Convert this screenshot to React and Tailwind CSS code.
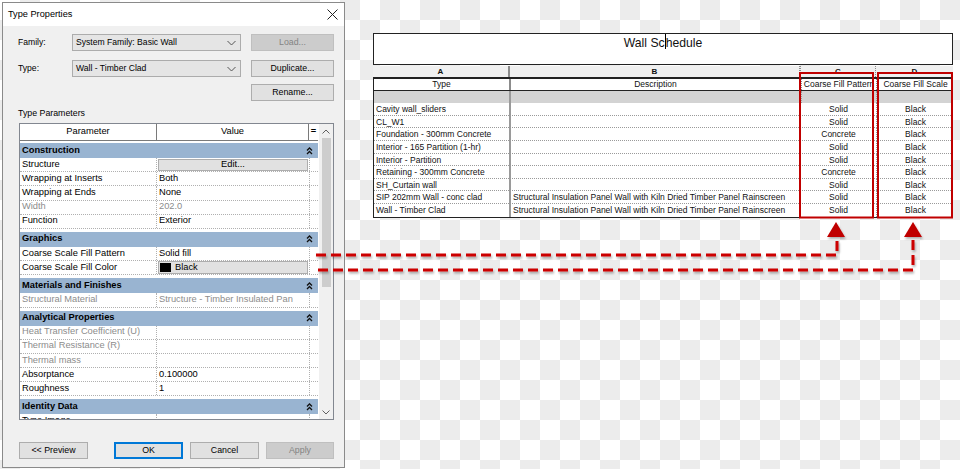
import React from "react";

const groups = [
  {
    name: "Construction",
    rows: [
      { name: "Structure", kind: "edit" },
      { name: "Wrapping at Inserts", value: "Both" },
      { name: "Wrapping at Ends", value: "None" },
      { name: "Width", value: "202.0", gray: true },
      { name: "Function", value: "Exterior" },
    ],
  },
  {
    name: "Graphics",
    rows: [
      { name: "Coarse Scale Fill Pattern", value: "Solid fill" },
      { name: "Coarse Scale Fill Color", kind: "color" },
    ],
  },
  {
    name: "Materials and Finishes",
    rows: [{ name: "Structural Material", value: "Structure - Timber Insulated Pan", gray: true }],
  },
  {
    name: "Analytical Properties",
    rows: [
      { name: "Heat Transfer Coefficient (U)", value: "", gray: true },
      { name: "Thermal Resistance (R)", value: "", gray: true },
      { name: "Thermal mass", value: "", gray: true },
      { name: "Absorptance", value: "0.100000" },
      { name: "Roughness", value: "1" },
    ],
  },
  {
    name: "Identity Data",
    rows: [{ name: "Type Image", value: "" }],
  },
];

const scheduleRows = [
  ["Cavity wall_sliders", "", "Solid", "Black"],
  ["CL_W1", "", "Solid", "Black"],
  ["Foundation - 300mm Concrete", "", "Concrete", "Black"],
  ["Interior - 165 Partition (1-hr)", "", "Solid", "Black"],
  ["Interior - Partition", "", "Solid", "Black"],
  ["Retaining - 300mm Concrete", "", "Concrete", "Black"],
  ["SH_Curtain wall", "", "Solid", "Black"],
  ["SIP 202mm Wall - conc clad", "Structural Insulation Panel Wall with Kiln Dried Timber Panel Rainscreen", "Solid", "Black"],
  ["Wall - Timber Clad", "Structural Insulation Panel Wall with Kiln Dried Timber Panel Rainscreen", "Solid", "Black"],
];

const DoubleChevron = () => (
  <svg width="7" height="8" viewBox="0 0 7 8" className="shrink-0">
    <path d="M1 3.5 L3.5 1 L6 3.5 M1 7 L3.5 4.5 L6 7" stroke="#111" strokeWidth="1.3" fill="none" />
  </svg>
);

const ComboArrow = () => (
  <svg width="9" height="6" viewBox="0 0 9 6">
    <path d="M0.5 1 L4.5 5 L8.5 1" stroke="#555" strokeWidth="1" fill="none" />
  </svg>
);

const Combo = ({ text }) => (
  <div className="w-[169px] h-[17px] bg-[#e5e5e5] border border-[#acacac] flex items-center justify-between pl-[3px] pr-[4px] text-[8.6px]">
    <span>{text}</span>
    <ComboArrow />
  </div>
);

const Btn = ({ children, disabled, primary, w = "w-[83px]" }) => (
  <div
    className={`${w} h-[17px] flex items-center justify-center text-[8.8px] ${
      disabled
        ? "bg-[#cccccc] border border-[#bfbfbf] text-[#838383]"
        : primary
        ? "bg-[#e1e1e1] border-2 border-[#0078d7]"
        : "bg-[#e1e1e1] border border-[#adadad]"
    }`}
  >
    {children}
  </div>
);

const ParamRow = ({ row }) => {
  const tone = row.gray ? "text-[#8c8c8c]" : "text-black";
  return (
    <div className="flex h-[14.2px] border-b border-dotted border-[#b0b0b0] bg-white">
      <div className={`w-[137px] shrink-0 pl-[2px] flex items-center border-r border-dotted border-[#b0b0b0] whitespace-nowrap overflow-hidden ${tone}`}>
        {row.name}
      </div>
      <div className={`w-[152px] shrink-0 flex items-center whitespace-nowrap overflow-hidden ${tone}`}>
        {row.kind === "edit" ? (
          <div className="w-[150px] h-[12px] ml-[1px] bg-[#e1e1e1] border border-[#adadad] flex items-center justify-center">Edit...</div>
        ) : row.kind === "color" ? (
          <div className="w-[150px] h-[13px] ml-[1px] bg-[#e1e1e1] border border-[#adadad] flex items-center gap-[4px] pl-[1px]">
            <span className="w-[11px] h-[9px] bg-black" />
            <span>Black</span>
          </div>
        ) : (
          <span className="pl-[2px]">{row.value}</span>
        )}
      </div>
      <div className="w-[9px] shrink-0 border-l border-dotted border-[#b0b0b0]" />
    </div>
  );
};

const Dialog = () => (
  <div className="ml-[2px] mt-[2px] w-[343px] h-[466px] bg-[#f0f0f0] border border-[#8a8a8a] flex flex-col shrink-0">
    <div className="h-[23px] bg-white flex items-center justify-between pl-[5px] pr-[6px]">
      <span className="text-[9.2px] text-black">Type Properties</span>
      <svg width="11" height="11" viewBox="0 0 11 11">
        <path d="M0.5 0.5 L10.5 10.5 M10.5 0.5 L0.5 10.5" stroke="#222" strokeWidth="1" />
      </svg>
    </div>

    <div className="flex items-center mt-[8px] pl-[15px]">
      <span className="w-[54px] text-[8.6px]">Family:</span>
      <Combo text="System Family: Basic Wall" />
      <div className="ml-[10px]">
        <Btn disabled>Load...</Btn>
      </div>
    </div>
    <div className="flex items-center mt-[9px] pl-[15px]">
      <span className="w-[54px] text-[8.6px]">Type:</span>
      <Combo text="Wall - Timber Clad" />
      <div className="ml-[10px]">
        <Btn>Duplicate...</Btn>
      </div>
    </div>
    <div className="flex mt-[7px] pl-[248px]">
      <Btn>Rename...</Btn>
    </div>

    <div className="mt-[6px] pl-[15px] text-[8.8px] leading-[12px]">Type Parameters</div>

    <div className="mt-[4px] ml-[16px] w-[315px] h-[297px] border border-[#828790] bg-white flex text-[9.3px]">
      <div className="w-[298px] h-full overflow-hidden flex flex-col">
        <div className="flex h-[17px] shrink-0 border-b border-[#7a7a7a] bg-white">
          <div className="w-[137px] shrink-0 border-r border-[#7a7a7a] flex items-center justify-center">Parameter</div>
          <div className="w-[152px] shrink-0 border-r border-[#7a7a7a] flex items-center justify-center">Value</div>
          <div className="w-[9px] shrink-0 flex items-center justify-center font-bold">=</div>
        </div>
        {groups.map((g, i) => (
          <div key={g.name} className={`${i === 0 ? "mt-[2px]" : "mt-[3px]"} shrink-0`}>
            <div className="h-[15px] bg-[#99b4d1] flex items-center justify-between pl-[2px] pr-[5px] font-bold">
              <span>{g.name}</span>
              <DoubleChevron />
            </div>
            {g.rows.map((r) => (
              <ParamRow key={r.name} row={r} />
            ))}
          </div>
        ))}
      </div>
      <div className="ml-[1px] w-[14px] h-full bg-[#f0f0f0] flex flex-col items-center">
        <div className="h-[14px] flex items-center justify-center">
          <svg width="8" height="5" viewBox="0 0 8 5">
            <path d="M0.5 4.5 L4 1 L7.5 4.5" stroke="#606060" strokeWidth="1" fill="none" />
          </svg>
        </div>
        <div className="w-[9px] h-[149px] bg-[#cdcdcd]" />
        <div className="flex-1" />
        <div className="h-[14px] flex items-center justify-center">
          <svg width="8" height="5" viewBox="0 0 8 5">
            <path d="M0.5 0.5 L4 4 L7.5 0.5" stroke="#606060" strokeWidth="1" fill="none" />
          </svg>
        </div>
      </div>
    </div>

    <div className="mt-[22px] pl-[16px] flex items-center">
      <Btn w="w-[69px]">&lt;&lt; Preview</Btn>
      <div className="ml-[26px]">
        <Btn w="w-[69px]" primary>OK</Btn>
      </div>
      <div className="ml-[7px]">
        <Btn w="w-[69px]">Cancel</Btn>
      </div>
      <div className="ml-[7px]">
        <Btn w="w-[68px]" disabled>Apply</Btn>
      </div>
    </div>
  </div>
);

const Schedule = () => (
  <div className="ml-[28px] mt-[33px] w-[580px] text-[8.5px] text-[#111]">
    <div className="h-[32px] bg-white border border-[#222] flex justify-center text-[12.2px]">
      <span>
        Wall Sc<span className="inline-block w-px h-[15px] bg-black align-top" />hedule
      </span>
    </div>
    <div className="mt-[1px] grid grid-cols-[137px_290px_76px_77px] h-[13px] bg-[#f0f0f0] font-bold text-[8px] leading-[11px] border-b-2 border-[#222]">
      <div className="text-center border-r-2 border-[#8c8c8c]">A</div>
      <div className="text-center border-r border-dotted border-[#8c8c8c]">B</div>
      <div className="text-center border-x border-dotted border-[#8c8c8c]">C</div>
      <div className="text-center">D</div>
    </div>
    <div className="bg-white border-l border-b border-[#222]">
      <div className="grid grid-cols-[137px_290px_76px_77px] h-[12px] leading-[11px] border-b border-[#222]">
        <div className="text-center border-r-2 border-[#8c8c8c]">Type</div>
        <div className="text-center border-r border-dotted border-[#8c8c8c]">Description</div>
        <div className="text-center whitespace-nowrap overflow-hidden border-x border-dotted border-[#8c8c8c]">Coarse Fill Pattern</div>
        <div className="text-center whitespace-nowrap overflow-hidden">Coarse Fill Scale</div>
      </div>
      <div className="grid grid-cols-[137px_290px_76px_77px] h-[12px] bg-[#d3d3d3]">
        <div className="border-r-2 border-[#9a9a9a]" />
        <div />
        <div className="border-x border-dotted border-[#9a9a9a]" />
        <div />
      </div>
      {scheduleRows.map((r, i) => (
        <div
          key={r[0]}
          className={`grid grid-cols-[137px_290px_76px_77px] h-[12.65px] leading-[12.65px] ${
            i < scheduleRows.length - 1 ? "border-b border-dotted border-[#9a9a9a]" : ""
          }`}
        >
          <div className="pl-[2px] whitespace-nowrap overflow-hidden border-r-2 border-[#9a9a9a]">{r[0]}</div>
          <div className="pl-[2px] whitespace-nowrap overflow-hidden border-r border-dotted border-[#9a9a9a]">{r[1]}</div>
          <div className="text-center border-r border-dotted border-[#9a9a9a]">{r[2]}</div>
          <div className="text-center">{r[3]}</div>
        </div>
      ))}
    </div>
  </div>
);

const Annotations = () => (
  <svg className="absolute inset-0 pointer-events-none" width="960" height="469" viewBox="0 0 960 469">
    <defs>
      <filter id="sh" x="-10%" y="-50%" width="120%" height="200%">
        <feDropShadow dx="1" dy="2" stdDeviation="1.2" floodColor="#000" floodOpacity="0.3" />
      </filter>
    </defs>
    <rect x="800" y="73" width="73" height="144.5" fill="none" stroke="#c00000" strokeWidth="2" />
    <rect x="878" y="73" width="74" height="144.5" fill="none" stroke="#c00000" strokeWidth="2" />
    <g filter="url(#sh)">
      <path d="M316 255 H837 V238" fill="none" stroke="#cc0000" strokeWidth="3" strokeDasharray="10 5" />
      <path d="M318 270 H913 V238" fill="none" stroke="#cc0000" strokeWidth="3" strokeDasharray="10 5" />
      <polygon points="836,222 827,237 845,237" fill="#c00000" />
      <polygon points="913,222 904,237 922,237" fill="#c00000" />
    </g>
  </svg>
);

export default function App() {
  return (
    <div className="relative w-[960px] h-[469px] overflow-hidden flex items-start font-['Liberation_Sans',Arial,sans-serif] text-black bg-[conic-gradient(#ececec_25%,#ffffff_0_50%,#ececec_0_75%,#ffffff_0)] bg-[length:40px_40px]">
      <Dialog />
      <Schedule />
      <Annotations />
    </div>
  );
}
